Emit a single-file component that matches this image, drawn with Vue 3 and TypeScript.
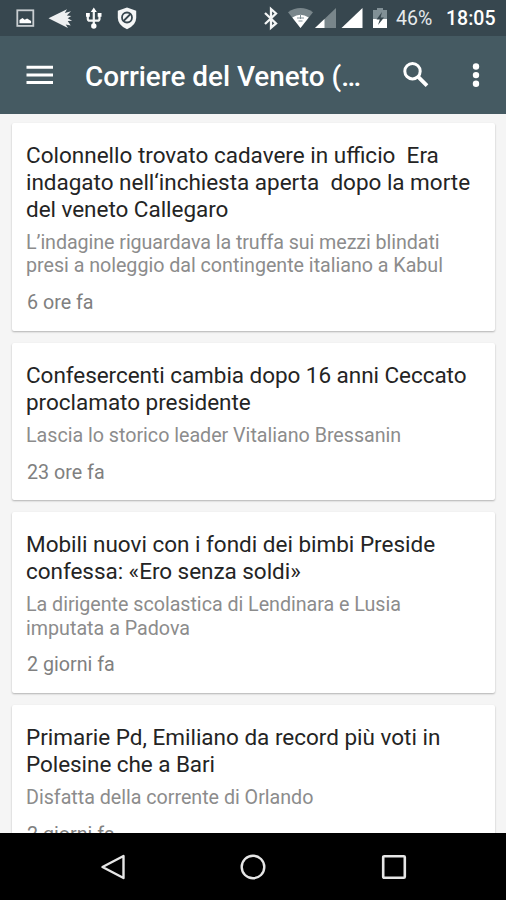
<script setup lang="ts">
interface Line {
  text: string
  spacing: number
}

interface Article {
  title: Line[]
  summary: Line[]
  age: string
}

const line = (text: string, spacing = -0.02): Line => ({ text, spacing })

const articles: Article[] = [
  {
    title: [
      line('Colonnello trovato cadavere in ufficio  Era', 0),
      line('indagato nell‘inchiesta aperta  dopo la morte'),
      line('del veneto Callegaro', -0.04),
    ],
    summary: [
      line('L’indagine riguardava la truffa sui mezzi blindati', -0.07),
      line('presi a noleggio dal contingente italiano a Kabul', -0.03),
    ],
    age: '6 ore fa',
  },
  {
    title: [line('Confesercenti cambia dopo 16 anni Ceccato', -0.05), line('proclamato presidente', -0.03)],
    summary: [line('Lascia lo storico leader Vitaliano Bressanin')],
    age: '23 ore fa',
  },
  {
    title: [line('Mobili nuovi con i fondi dei bimbi Preside', -0.01), line('confessa: «Ero senza soldi»', -0.04)],
    summary: [line('La dirigente scolastica di Lendinara e Lusia', -0.03), line('imputata a Padova', 0)],
    age: '2 giorni fa',
  },
  {
    title: [line('Primarie Pd, Emiliano da record più voti in', -0.01), line('Polesine che a Bari', -0.06)],
    summary: [line('Disfatta della corrente di Orlando')],
    age: '2 giorni fa',
  },
]
</script>

<template>
  <div class="screen">
    <header class="status">
      <svg class="status-icons" width="150" height="36" viewBox="0 0 150 36">
        <rect x="17.3" y="10.3" width="16" height="15.6" fill="none" stroke="#c9ced1" stroke-width="1.8" />
        <path d="M19.5 23.3v-3.2l3-2 2.2 1.6 2.4-1.2 4 2.5v2.3z" fill="#fff" />
        <path d="M48.5 18.2 67 9.2l-2.2 3.9 6.2-1.8-4.2 4.1 4.5.6-3.6 2.2 4.4 2.500-4.400.3 3 4.600-5-1 2.300 3.300z" fill="#eef0f1" />
        <g fill="none" stroke="#f2f4f4" stroke-width="2.2">
          <path d="M93.8 10v16M87.8 15v3.7q0 2 2 2h7.700q2 0 2-2V15" />
        </g>
        <path d="m93.8 7.500 3 4.500h-6zM86 13h3.800v3.800H86zM97.700 13h3.800v3.800h-3.800z" fill="#fff" />
        <circle cx="93.8" cy="26" r="2.700" fill="#fff" />
        <path d="m127 7.500 9.200 3.300v7q0 7.500-9.200 11.400-9.200-3.900-9.200-11.400v-7z" fill="#f5f7f7" />
        <circle cx="127" cy="17.500" r="5" fill="none" stroke="#37474f" stroke-width="1.800" />
        <path d="m123.500 21 7-7" stroke="#37474f" stroke-width="1.800" />
      </svg>
      <div class="status-right">
        <svg width="132" height="36" viewBox="260 0 132 36">
          <path d="m265 13 11 10.500-5 4.200V9l5 4.500L265 24" fill="none" stroke="#f4f6f6" stroke-width="2.300" />
          <path d="M288 12.200q12.500-8.300 25 0L300.500 28z" fill="#79868b" />
          <path d="M292.300 17.500q8.200-5.300 16.400 0L300.500 28z" fill="#fff" />
          <path d="M297 18h7M298.500 21h4M300.500 15v4" stroke="#819096" stroke-width="1" />
          <path d="M336 8v20h-21z" fill="#79868b" />
          <path d="M324.500 19v9H315z" fill="#fff" />
          <path d="M362.500 8v20H341.500z" fill="#fff" />
          <path d="M377 8h6v2h4v9h-14v-9h4z" fill="#819096" />
          <path d="M373 19h14v9h-14z" fill="#fff" />
          <path d="m382 12-5.500 7.500h3.300L378 25l6-7.500h-3.400z" fill="#37474f" />
        </svg>
        <span class="battery">46%</span>
        <span class="clock">18:05</span>
      </div>
    </header>

    <div class="toolbar">
      <svg class="menu" width="27" height="20" viewBox="0 0 27 20">
        <path d="M.5 2.200H27M.5 10H27M.5 17.600H27" stroke="#fff" stroke-width="3" />
      </svg>
      <h1>Corriere del Veneto (…</h1>
      <svg class="search" width="26" height="26" viewBox="0 0 26 26">
        <circle cx="9.500" cy="9.200" r="7.700" fill="none" stroke="#fff" stroke-width="3" />
        <path d="m15 14.700 9 9" stroke="#fff" stroke-width="3.800" />
      </svg>
      <svg class="more" width="8" height="26" viewBox="0 0 8 26">
        <g fill="#fff">
          <circle cx="4" cy="4.500" r="3.200" />
          <circle cx="4" cy="13.100" r="3.200" />
          <circle cx="4" cy="21.700" r="3.200" />
        </g>
      </svg>
    </div>

    <main class="feed">
      <article v-for="(a, i) in articles" :key="i" class="card">
        <h2>
          <span v-for="l in a.title" :key="l.text" class="line" :style="{ letterSpacing: l.spacing + 'px' }">{{ l.text }}</span>
        </h2>
        <p class="summary">
          <span v-for="l in a.summary" :key="l.text" class="line" :style="{ letterSpacing: l.spacing + 'px' }">{{ l.text }}</span>
        </p>
        <p class="age">{{ a.age }}</p>
      </article>
    </main>

    <nav class="nav">
      <svg width="26" height="28" viewBox="0 0 26 28">
        <path d="M2.500 14 23.500 3v22z" fill="none" stroke="#e6e6e6" stroke-width="2.400" stroke-linejoin="round" />
      </svg>
      <svg width="28" height="28" viewBox="0 0 28 28">
        <circle cx="14" cy="14" r="11.300" fill="none" stroke="#e6e6e6" stroke-width="2.400" />
      </svg>
      <svg width="28" height="28" viewBox="0 0 28 28">
        <rect x="3.200" y="3.200" width="21.600" height="21.600" rx="1" fill="none" stroke="#e6e6e6" stroke-width="2.600" />
      </svg>
    </nav>
  </div>
</template>

<style>
body {
  margin: 0;
}
</style>

<style scoped>
.screen {
  display: flex;
  flex-direction: column;
  width: 506px;
  height: 900px;
  overflow: hidden;
  background: #f5f5f5;
  font-family: Roboto, 'Liberation Sans', sans-serif;
}
.status {
  display: flex;
  justify-content: space-between;
  flex: none;
  height: 36px;
  background: #37474f;
}
.status svg {
  flex: none;
}
.status-right {
  display: flex;
  width: 246px;
  color: #e6eaec;
  font-size: 19.5px;
  line-height: 38px;
  white-space: nowrap;
}
.battery {
  width: 50px;
  margin-left: 4px;
}
.clock {
  color: #fff;
  font-weight: 500;
}
.toolbar {
  display: flex;
  align-items: center;
  flex: none;
  box-sizing: border-box;
  height: 78px;
  padding: 0 26px;
  background: #455a62;
}
.menu {
  margin-right: 32px;
}
h1 {
  flex: 1;
  margin: 3px 0 0;
  color: #fff;
  font-size: 27.9px;
  font-weight: 500;
  line-height: 36px;
  white-space: nowrap;
}
.search {
  margin-right: 43px;
}
.feed {
  display: flex;
  flex: 1;
  flex-direction: column;
  gap: 12.1px;
  min-height: 0;
  padding: 9.3px 11px 0 12px;
  overflow: hidden;
}
.card {
  flex: none;
  box-sizing: border-box;
  padding: 19px 14px 15.8px;
  border-radius: 2px;
  background: #fff;
  box-shadow: 0 1px 2px rgba(0, 0, 0, 0.28);
}
.line {
  display: block;
  width: max-content;
  white-space: pre;
}
h2 {
  margin: 0;
  color: #242424;
  font-size: 22.5px;
  font-weight: 400;
  line-height: 26.8px;
}
.summary {
  margin: 8.3px 0 0;
  color: #8c8c8c;
  font-size: 19.7px;
  line-height: 23.2px;
}
.age {
  margin: 13.600px 0 0 1px;
  color: #808080;
  font-size: 19.7px;
  line-height: 24px;
}
.nav {
  display: flex;
  align-items: center;
  justify-content: center;
  gap: 113px;
  flex: none;
  box-sizing: border-box;
  height: 67px;
  padding-left: 2px;
  background: #000;
}
</style>
